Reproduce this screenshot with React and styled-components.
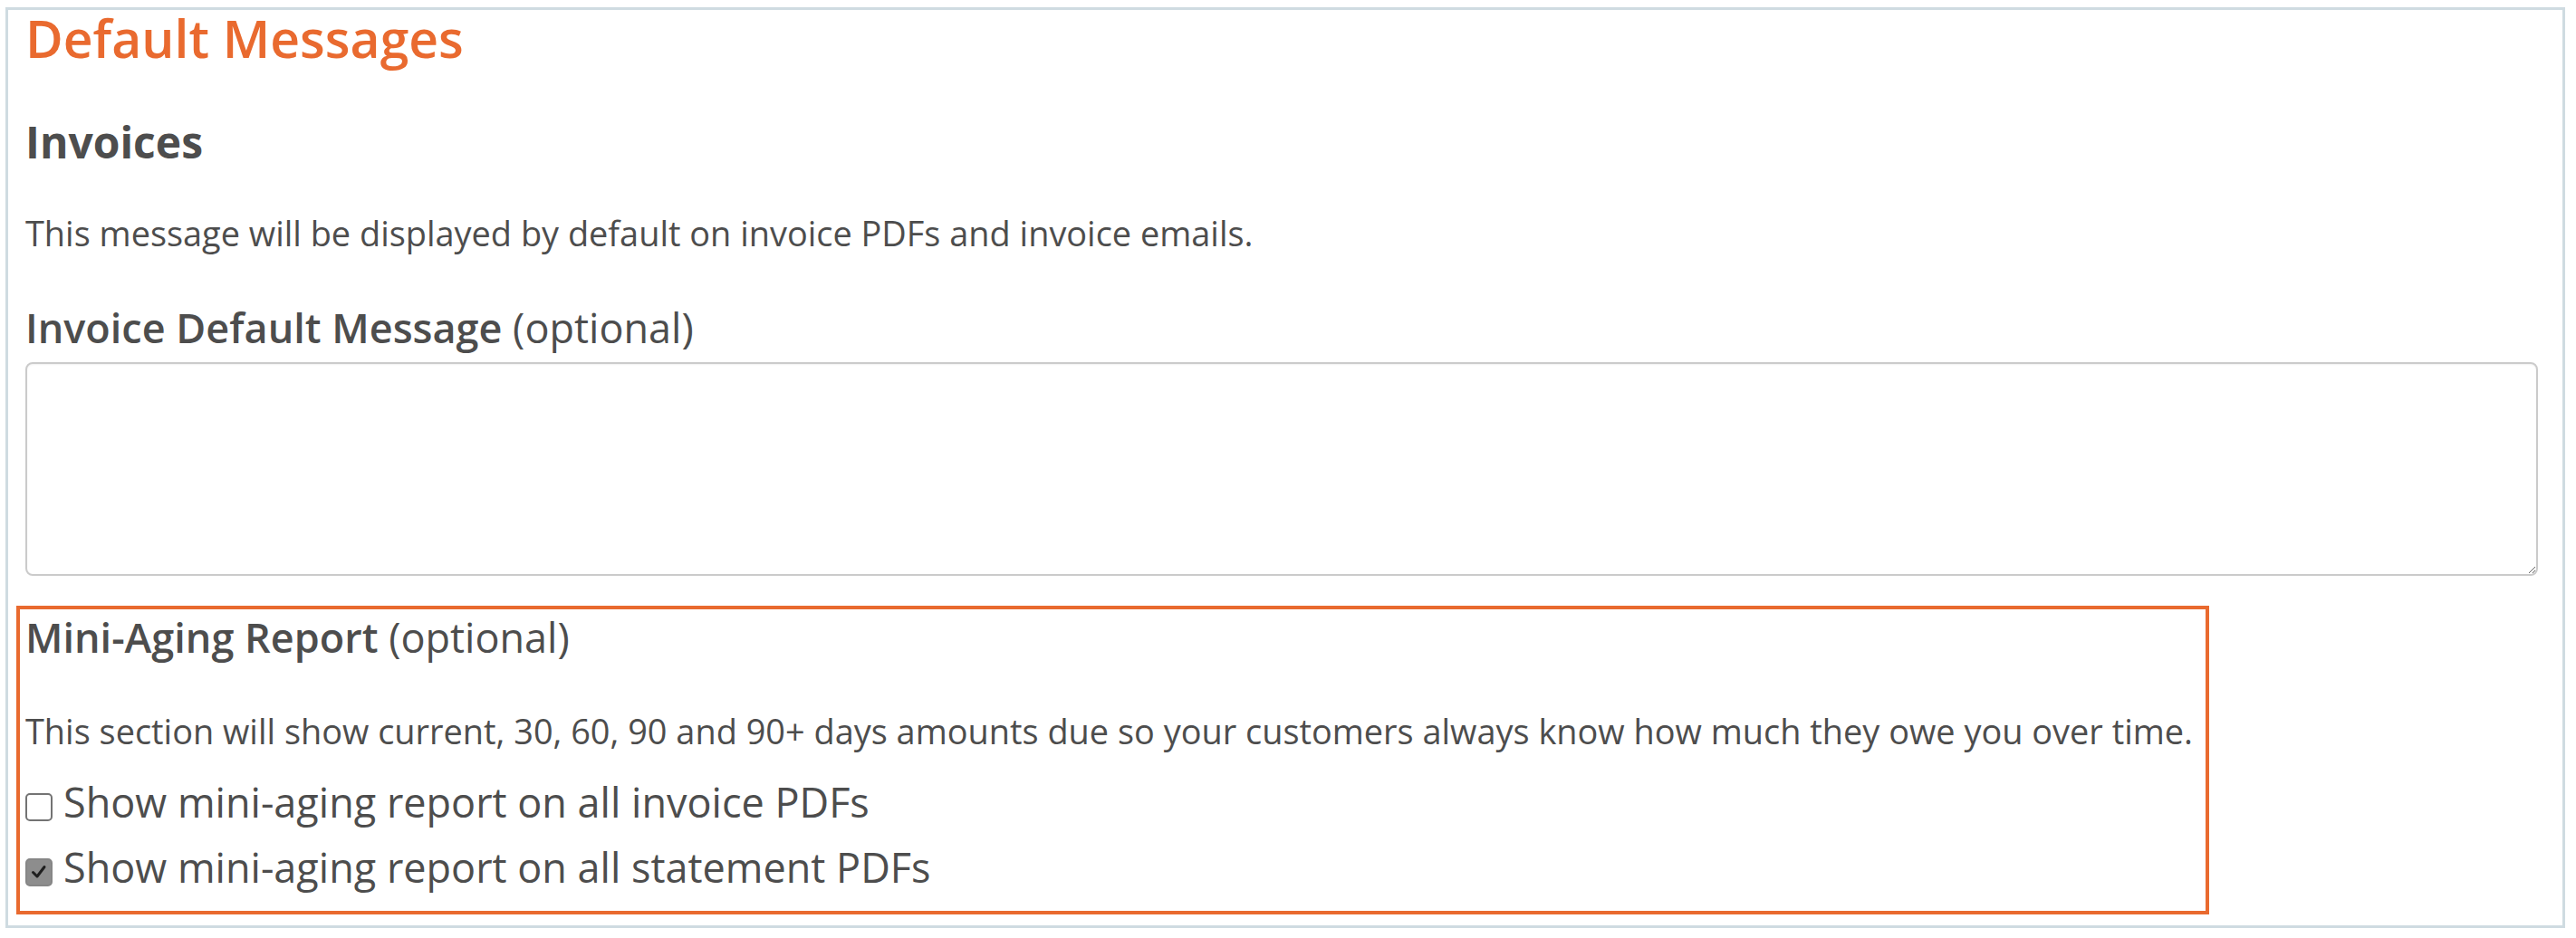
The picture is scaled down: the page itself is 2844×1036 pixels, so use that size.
import React from 'react';
import styled, { createGlobalStyle } from 'styled-components';

const GlobalStyle = createGlobalStyle`
  html, body {
    margin: 0;
    padding: 0;
    background: #ffffff;
  }
  body {
    font-family: "Open Sans", "Noto Sans", "Liberation Sans", sans-serif;
    color: #4d4d4d;
  }
`

const Panel = styled.section`
  margin: 8px 12px 0 6px;
  border: 3px solid #cfdbe1;
  padding: 0 27px 12px 19px;
`

const Title = styled.h1`
  margin: 0;
  font-size: 57px;
  line-height: 62px;
  font-weight: 600;
  color: #e96a2f;
`

const SubTitle = styled.h3`
  margin: 55px 0 0;
  font-size: 48px;
  line-height: 58px;
  font-weight: 700;
  color: #4d4d4d;
`

const Text = styled.p`
  margin: ${p => p.$top}px 0 0;
  font-size: 37.9px;
  line-height: 54px;
  font-weight: 400;
`

const Label = styled.label`
  display: block;
  margin: ${p => p.$top}px 0 0;
  font-size: 45px;
  line-height: 56px;
  font-weight: 400;

  strong {
    font-weight: 600;
  }
`

const Textarea = styled.textarea`
  display: block;
  box-sizing: border-box;
  width: 100%;
  height: 236px;
  margin-top: 10px;
  border: 2px solid #cbcbcb;
  border-radius: 8px;
  box-shadow: inset 0 1px 2px rgba(0, 0, 0, 0.06);
  font: inherit;
  font-size: 38px;
  outline: 0;
  resize: vertical;
`

const Highlight = styled.div`
  box-sizing: border-box;
  width: 2421px;
  margin: 33px 0 0 -10px;
  border: 4px solid #e96a2f;
  padding: 3px 6px 20px;
`

const CheckRow = styled.label`
  display: flex;
  align-items: center;
  gap: 12px;
  margin-top: ${p => p.$top}px;
  font-size: 45px;
  line-height: 56px;
  cursor: pointer;
`

const Box = styled.span`
  box-sizing: border-box;
  flex: none;
  display: flex;
  align-items: center;
  justify-content: center;
  width: 30px;
  height: 31px;
  margin-top: 10px;
  border-radius: 5px;
  border: 2px solid ${p => (p.$checked ? '#868686' : '#737373')};
  background: ${p => (p.$checked ? '#8d8d8d' : '#ffffff')};
`

const Check = ({ checked }) => (
  <Box $checked={checked}>
    {checked && (
      <svg width="20" height="20" viewBox="0 0 20 20">
        <path d="M3.5 10.5 L8 15 L16 4.5" fill="none" stroke="#1f1f1f" strokeWidth="3" strokeLinecap="round" strokeLinejoin="round" />
      </svg>
    )}
  </Box>
)

export default function App() {
  return (
    <>
      <GlobalStyle />
      <Panel>
        <Title>Default Messages</Title>
        <SubTitle>Invoices</SubTitle>
        <Text $top={44}>This message will be displayed by default on invoice PDFs and invoice emails.</Text>
        <Label $top={50}>
          <strong>Invoice Default Message</strong> (optional)
        </Label>
        <Textarea />
        <Highlight>
          <Label $top={0}>
            <strong>Mini-Aging Report</strong> (optional)
          </Label>
          <Text $top={48}>
            This section will show current, 30, 60, 90 and 90+ days amounts due so your customers always know how much they owe you over time.
          </Text>
          <CheckRow $top={24}>
            <Check checked={false} />
            Show mini-aging report on all invoice PDFs
          </CheckRow>
          <CheckRow $top={16}>
            <Check checked />
            Show mini-aging report on all statement PDFs
          </CheckRow>
        </Highlight>
      </Panel>
    </>
  );
}
